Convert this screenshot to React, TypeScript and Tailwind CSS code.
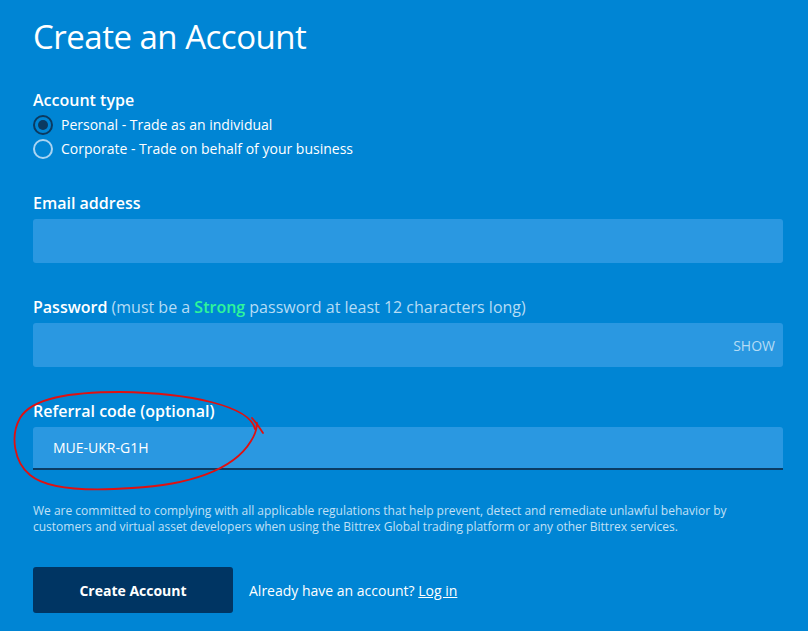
import React, { useState } from 'react';

const App = () => {
  const [type, setType] = useState<'personal' | 'corporate'>('personal');
  const [email, setEmail] = useState('');
  const [password, setPassword] = useState('');
  const [showPw, setShowPw] = useState(false);
  const [code, setCode] = useState('MUE-UKR-G1H');

  return (
    <div className="relative min-h-[631px] w-full bg-[#0085d4] text-white" style={{ fontFamily: '"Open Sans", "Noto Sans", sans-serif' }}>
      <div className="pl-[33px] pr-[25px] pt-[15px]">
        <h1 className="text-[33px] leading-[44px] font-normal tracking-[-0.5px]">Create an Account</h1>

        <div className="mt-[31px]">
          <div className="text-[16px] font-semibold leading-[20px]">Account type</div>
          <div className="mt-[5px] flex flex-col gap-[4px]">
            <label className="flex items-center gap-[8px] text-[14px] leading-[20px] cursor-pointer" onClick={() => setType('personal')}>
              <span className={`w-[20px] h-[20px] rounded-full border-2 flex items-center justify-center ${type === 'personal' ? 'border-[#0b3a60]' : 'border-[#a9d4f2]'}`}>
                {type === 'personal' && <span className="w-[10px] h-[10px] rounded-full bg-[#0b3a60]" />}
              </span>
              Personal - Trade as an individual
            </label>
            <label className="flex items-center gap-[8px] text-[14px] leading-[20px] cursor-pointer" onClick={() => setType('corporate')}>
              <span className={`w-[20px] h-[20px] rounded-full border-2 flex items-center justify-center ${type === 'corporate' ? 'border-[#0b3a60]' : 'border-[#a9d4f2]'}`}>
                {type === 'corporate' && <span className="w-[10px] h-[10px] rounded-full bg-[#0b3a60]" />}
              </span>
              Corporate - Trade on behalf of your business
            </label>
          </div>
        </div>

        <div className="mt-[34px]">
          <div className="text-[16px] font-semibold leading-[20px]">Email address</div>
          <input
            value={email}
            onChange={e => setEmail(e.target.value)}
            className="mt-[6px] block w-full h-[44px] rounded-[3px] bg-[#2a98e1] px-[20px] text-[14px] outline-none"
          />
        </div>

        <div className="mt-[34px]">
          <div className="text-[16px] leading-[20px]">
            <span className="font-semibold">Password</span>{' '}
            <span className="text-[#b5dcf5]">(must be a <span className="font-semibold text-[#2ef59a]">Strong</span> password at least 12 characters long)</span>
          </div>
          <div className="mt-[6px] relative">
            <input
              type={showPw ? 'text' : 'password'}
              value={password}
              onChange={e => setPassword(e.target.value)}
              className="block w-full h-[44px] rounded-[3px] bg-[#2a98e1] pl-[20px] pr-[60px] text-[14px] outline-none"
            />
            <button onClick={() => setShowPw(!showPw)} className="absolute right-[8px] top-0 h-[44px] text-[14px] text-[#b5dcf5]">
              SHOW
            </button>
          </div>
        </div>

        <div className="mt-[34px]">
          <div className="text-[16px] font-semibold leading-[20px]">Referral code (optional)</div>
          <input
            autoFocus
            value={code}
            onChange={e => setCode(e.target.value)}
            className="mt-[6px] block w-full h-[43px] rounded-t-[3px] bg-[#2a98e1] border-b-2 border-[#0a3c64] px-[20px] text-[14px] outline-none caret-white"
          />
        </div>

        <p className="mt-[33px] text-[12px] leading-[16px] text-[#c0e0f6]">
          We are committed to complying with all applicable regulations that help prevent, detect and remediate unlawful behavior by customers and virtual asset developers when using the Bittrex Global trading platform or any other Bittrex services.
        </p>

        <div className="mt-[32px] flex items-center gap-[16px]">
          <button className="w-[200px] h-[46px] rounded-[3px] bg-[#003563] text-[14px] font-bold">Create Account</button>
          <span className="text-[14px]">
            Already have an account? <a href="#" className="underline">Log in</a>
          </span>
        </div>
      </div>

      <svg className="absolute left-0 top-0 pointer-events-none" width="808" height="631" viewBox="0 0 808 631" fill="none">
        <path
          d="M255 429 C250 406 190 393 120 392 C70 392 32 398 20 418 C10 436 14 462 30 475 C48 490 92 491 132 488 C187 485 233 471 251 441 C256 433 257 427 257 423 M252 418 L257 424 L263 433"
          stroke="#e01010"
          strokeWidth="1.8"
          strokeLinecap="round"
          strokeLinejoin="round"
        />
      </svg>
    </div>
  );
};

export default App;
